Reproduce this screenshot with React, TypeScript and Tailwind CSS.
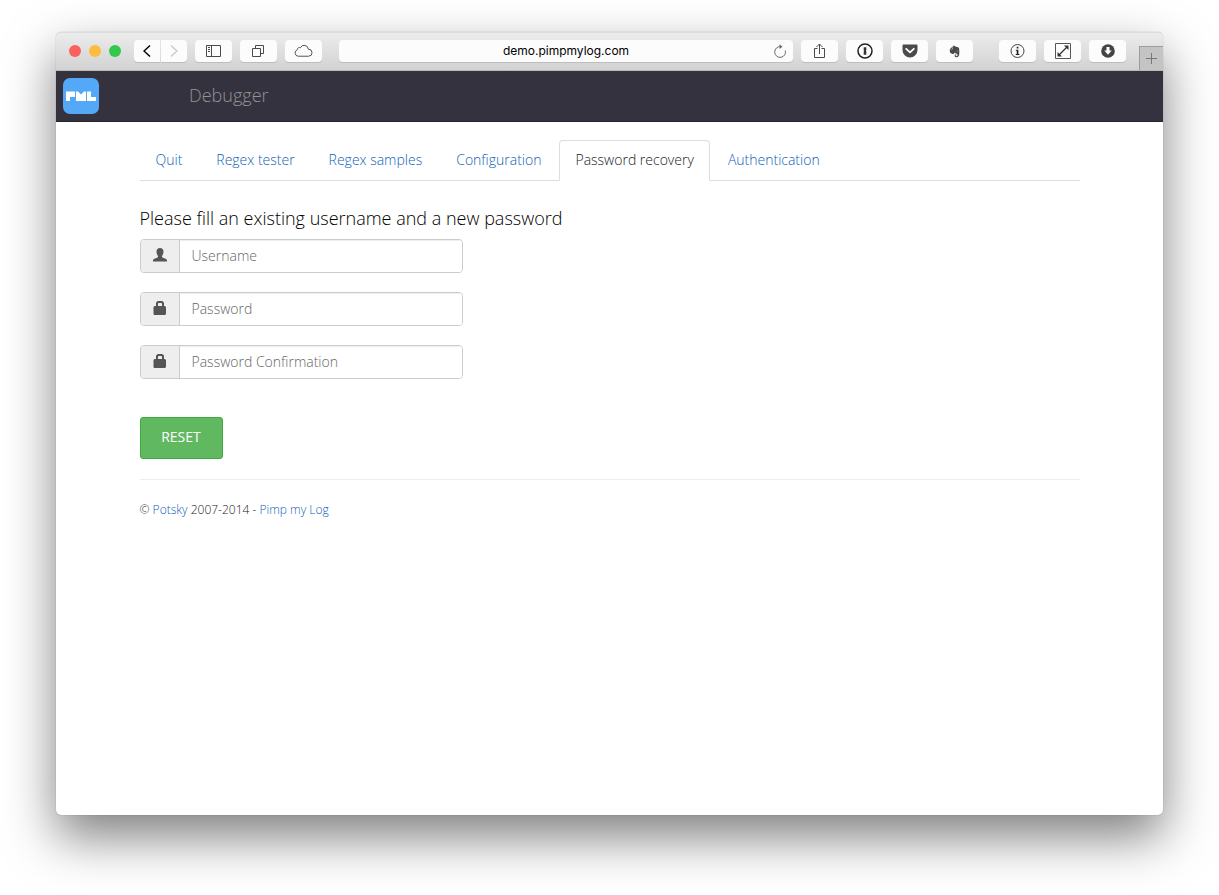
import type { ReactNode } from "react";
import { FaEvernote } from "react-icons/fa";

const TABS = ["Quit", "Regex tester", "Regex samples", "Configuration", "Password recovery", "Authentication"];
const ACTIVE_TAB = "Password recovery";

function ToolbarButton({ label, children }: { label: string; children: ReactNode }) {
  return (
    <button
      type="button"
      aria-label={label}
      className="flex h-[22px] w-[37px] shrink-0 items-center justify-center rounded bg-[#fcfcfc] text-[#4a4a4a] shadow-[0_1px_0_#bdbdbd]"
    >
      {children}
    </button>
  );
}

function Toolbar() {
  return (
    <header className="flex h-[39px] items-center rounded-t-[5px] border-y border-t-[#dcdcdc] border-b-[#b8b8b8] bg-linear-to-b from-[#ececec] to-[#d2d2d2] pb-px">
      <div className="ml-[13px] flex gap-2">
        <span className="size-3 rounded-full bg-[#fc605c]" />
        <span className="size-3 rounded-full bg-[#fdbc40]" />
        <span className="size-3 rounded-full bg-[#34c84a]" />
      </div>
      <div className="ml-[13px] flex gap-px">
        <button
          type="button"
          aria-label="Back"
          className="flex h-[22px] w-[26px] items-center justify-center rounded-l bg-[#fcfcfc] text-black shadow-[0_1px_0_#bdbdbd]"
        >
          <svg width="8" height="14" viewBox="0 0 8 14" fill="none" stroke="currentColor" strokeWidth="1.5">
            <path d="M7 1.500 1 7l6 5.500" />
          </svg>
        </button>
        <button
          type="button"
          aria-label="Forward"
          className="flex h-[22px] w-[26px] items-center justify-center rounded-r bg-[#fcfcfc] text-[#c8c8c8] shadow-[0_1px_0_#bdbdbd]"
        >
          <svg width="8" height="14" viewBox="0 0 8 14" fill="none" stroke="currentColor" strokeWidth="1.2">
            <path d="m1 1.500 6 5.500-6 5.500" />
          </svg>
        </button>
      </div>
      <div className="ml-2 flex gap-2">
        <ToolbarButton label="Show sidebar">
          <svg width="15" height="12" viewBox="0 0 15 12" fill="none" stroke="currentColor">
            <path d="M.5.5h14v11H.5zM5.500.5v11M2 2.500h2M2 4.500h2M2 6.500h2" />
          </svg>
        </ToolbarButton>
        <ToolbarButton label="Show all tabs">
          <svg width="13" height="12" viewBox="0 0 13 12" fill="none" stroke="currentColor">
            <path d="M.5 3.500h8v8h-8zM3.500 3.500v-3h8v8h-3" />
          </svg>
        </ToolbarButton>
        <ToolbarButton label="iCloud tabs">
          <svg width="19" height="14" viewBox="0 0 20 14" fill="none" stroke="currentColor">
            <path d="M4.500 12.500a3.500 3.500 0 0 1-1-6.800 2.300 2.300 0 0 1 3.300-2.200 4.300 4.300 0 0 1 8.200 1.600 3.700 3.700 0 0 1 .5 7.400z" />
          </svg>
        </ToolbarButton>
      </div>
      <div className="ml-[17px] flex h-[22px] min-w-0 flex-1 items-center rounded bg-[#fcfcfc] pr-1.5 pl-5 shadow-[0_1px_0_#bdbdbd]">
        <input
          aria-label="Address"
          defaultValue="demo.pimpmylog.com"
          className="min-w-0 flex-1 bg-transparent text-center font-['Inter','Liberation_Sans',sans-serif] text-xs leading-5 text-black outline-none"
        />
        <button type="button" aria-label="Reload" className="text-[#6b6b6b]">
          <svg width="14" height="14" viewBox="0 0 14 14" fill="none" stroke="currentColor">
            <path d="M12.300 6.500A5.400 5.400 0 1 1 7.500 2.600" />
            <path d="M6.500.2 9.500 2.700 6.500 5z" fill="currentColor" stroke="none" />
          </svg>
        </button>
      </div>
      <div className="ml-2 flex gap-2">
        <ToolbarButton label="Share">
          <svg width="11" height="16" viewBox="0 0 11 16" fill="none" stroke="currentColor">
            <path d="M3.500 5.500h-3v9h10v-9h-3M5.500 11V1M2.500 4l3-3 3 3" />
          </svg>
        </ToolbarButton>
        <ToolbarButton label="1Password">
          <svg width="16" height="16" viewBox="0 0 16 16">
            <circle cx="8" cy="8" r="7" fill="none" stroke="#222" strokeWidth="1.500" />
            <path d="M6.700 4.300h2.600v3L8.800 8l.5.600v3.200H6.700V8.800L7.200 8l-.5-.6z" fill="#333" />
          </svg>
        </ToolbarButton>
        <ToolbarButton label="Pocket">
          <svg width="16" height="14" viewBox="0 0 16 14">
            <path d="M1.500.5h13a1 1 0 0 1 1 1V6a7.500 7.500 0 0 1-15 0V1.500a1 1 0 0 1 1-1z" fill="#4a4a4a" />
            <path d="m4.200 4.800 3.800 3.600 3.800-3.600" fill="none" stroke="#fff" strokeWidth="1.800" strokeLinecap="round" strokeLinejoin="round" />
          </svg>
        </ToolbarButton>
        <ToolbarButton label="Evernote">
          <FaEvernote size={13} />
        </ToolbarButton>
      </div>
      <div className="ml-[26px] flex gap-2">
        <ToolbarButton label="Page info">
          <svg width="15" height="14" viewBox="0 0 14 14">
            <circle cx="7" cy="7" r="6.500" fill="none" stroke="#444" />
            <path d="M6.200 2.800h1.700v1.700H6.200zM5.300 5.700h2.600v4.200h1v1H5.200v-1h1V6.700h-.9z" fill="#222" />
          </svg>
        </ToolbarButton>
        <ToolbarButton label="Resize window">
          <svg width="16" height="16" viewBox="0 0 16 16">
            <path d="M.5.5h15v15H.5z" fill="none" stroke="#555" />
            <path d="m4 12 8-8" stroke="#333" strokeWidth="1.300" />
            <path d="M9 2.500h4.500V7zM2.500 9v4.500H7z" fill="#333" />
          </svg>
        </ToolbarButton>
        <ToolbarButton label="Downloads">
          <svg width="14" height="14" viewBox="0 0 14 14">
            <circle cx="7" cy="7" r="6.800" fill="#444" />
            <path d="M5.500 3h3v3.500h2.200L7 10.800 3.300 6.500h2.200z" fill="#fff" />
          </svg>
        </ToolbarButton>
      </div>
      <button
        type="button"
        aria-label="New tab"
        className="-mb-px ml-[13px] flex h-6 w-6 items-center justify-center self-end border-t border-l border-[#9c9c9c] bg-[#c4c4c4] text-[#777]"
      >
        <svg width="11" height="11" viewBox="0 0 11 11" stroke="currentColor">
          <path d="M5.500 0v11M0 5.500h11" />
        </svg>
      </button>
    </header>
  );
}

function Logo() {
  return (
    <svg width="36" height="36" viewBox="0 0 36 36" role="img" aria-label="Pimp my Log">
      <rect width="36" height="36" rx="7" fill="#54a8f8" />
      <path d="M3 13.500h9v5.500H7v4H3zM13 13.500h2l3 3 3-3h2V23H13zM24 13.500h4V19h5v4h-9z" fill="#fff" />
    </svg>
  );
}

function UserIcon() {
  return (
    <svg width="14" height="14" viewBox="0 0 14 14" fill="#555">
      <path d="M7 0c2.200 0 3.500 1.300 3.500 3.500 0 1.500-.5 3-1.200 4-.4.600-.5 1.700.2 2l3 1.200c.9.400 1.500 1 1.500 1.800v1H0v-1c0-.8.600-1.400 1.500-1.800l3-1.200c.7-.3.600-1.400.2-2-.7-1-1.200-2.500-1.200-4C3.500 1.300 4.800 0 7 0z" />
    </svg>
  );
}

function LockIcon() {
  return (
    <svg width="14" height="14" viewBox="0 0 14 14" fill="#555">
      <path d="M3 5V2.500C3 1 4 0 5.500 0h3C10 0 11 1 11 2.500V5h1l1 1v7l-1 1H1l-.5-1V6L1.500 5zM5 5h4V3c0-.6-.4-1-1-1H6c-.6 0-1 .4-1 1z" />
    </svg>
  );
}

function Field({ id, label, type, icon }: { id: string; label: string; type: string; icon: ReactNode }) {
  return (
    <div className="flex h-[34px] w-full max-w-[323px] overflow-hidden rounded border border-[#ccc]">
      <label htmlFor={id} aria-label={label} className="flex w-[39px] shrink-0 items-center justify-center border-r border-[#ccc] bg-[#eee] pb-0.5">
        {icon}
      </label>
      <input
        id={id}
        type={type}
        placeholder={label}
        className="min-w-0 flex-1 bg-white px-3 text-sm font-light text-[#555] shadow-[inset_0_1px_1px_rgba(0,0,0,0.075)] outline-none placeholder:text-[#666]"
      />
    </div>
  );
}

export default function App() {
  return (
    <div className="flex min-h-screen flex-col bg-white px-14 pt-8 pb-20 font-['Open_Sans','Noto_Sans',sans-serif]">
      <div className="flex flex-1 flex-col rounded-[5px] bg-white shadow-[0_0_1px_rgba(0,0,0,0.4),0_22px_50px_rgba(0,0,0,0.5)]">
        <Toolbar />
        <nav className="flex h-[51px] items-center border-b border-[#26242e] bg-[#34323f] pl-[7px]">
          <Logo />
          <span className="ml-[90px] pb-0.5 text-lg font-light text-[#929292]">Debugger</span>
        </nav>
        <main className="mx-auto w-full max-w-[940px] pt-[18px]">
          <ul className="flex gap-0.5 border-b border-[#ddd]">
            {TABS.map((tab) => (
              <li key={tab} className="-mb-px">
                <a
                  href="#"
                  className={
                    tab === ACTIVE_TAB
                      ? "block rounded-t border border-[#ddd] border-b-white bg-white px-[15px] pt-2 pb-2.5 text-sm leading-[21px] font-light text-[#222]"
                      : "block border border-transparent px-[15px] pt-2 pb-2.5 text-sm leading-[21px] font-light text-[#0f62b8]"
                  }
                >
                  {tab}
                </a>
              </li>
            ))}
          </ul>
          <form>
            <h1 className="mt-[25px] mb-[9px] text-lg leading-6 font-light text-black">Please fill an existing username and a new password</h1>
            <div className="flex flex-col gap-[19px]">
              <Field id="username" label="Username" type="text" icon={<UserIcon />} />
              <Field id="password" label="Password" type="password" icon={<LockIcon />} />
              <Field id="password-confirmation" label="Password Confirmation" type="password" icon={<LockIcon />} />
            </div>
            <button type="button" className="mt-[38px] h-[42px] w-[83px] rounded-[3px] border border-[#3faa3f] bg-[#60b861] pb-0.5 text-sm text-white">
              RESET
            </button>
          </form>
          <footer className="mt-5 border-t border-[#eee] pt-5 text-xs leading-5 font-light text-[#222]">
            © <a href="#" className="text-[#0f62b8]">Potsky</a> 2007-2014 - <a href="#" className="text-[#0f62b8]">Pimp my Log</a>
          </footer>
        </main>
      </div>
    </div>
  );
}
